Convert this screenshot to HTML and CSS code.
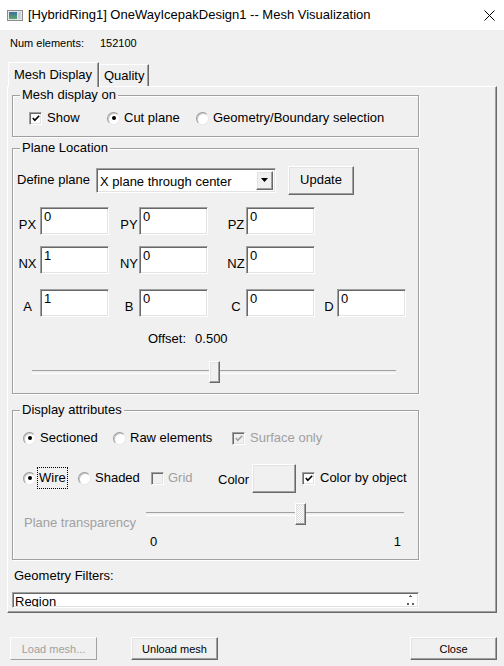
FILE: index.html
```html
<!DOCTYPE html>
<html>
<head>
<meta charset="utf-8">
<title>Mesh Visualization</title>
<link rel="stylesheet" href="styles.css">
</head>
<body>
<div class="titlebar">
  <svg class="appicon" width="16" height="11" viewBox="0 0 16 11">
    <defs>
      <linearGradient id="ig" x1="0" y1="0" x2="0" y2="1">
        <stop offset="0" stop-color="#3d6f9a"/>
        <stop offset="1" stop-color="#5fa46e"/>
      </linearGradient>
    </defs>
    <rect x="0.5" y="0.5" width="15" height="10" fill="#e8e8e8" stroke="#8a8a8a"/>
    <rect x="2" y="2" width="8" height="7" fill="url(#ig)"/>
    <rect x="11" y="2" width="3" height="7" fill="#c8d0d8"/>
  </svg>
  <span class="title">[HybridRing1] OneWayIcepakDesign1 -- Mesh Visualization</span>
  <svg class="close" width="11" height="11" viewBox="0 0 11 11">
    <path d="M0.5 0.5 L10.5 10.5 M10.5 0.5 L0.5 10.5" stroke="#000" stroke-width="1" fill="none"/>
  </svg>
</div>

<div class="numrow"><span class="numlabel">Num elements:</span><span>152100</span></div>

<div class="tabs">
  <div class="tab active">Mesh Display</div>
  <div class="tab">Quality</div>
</div>

<div class="panel">
  <div class="group g1">
    <div class="legend">Mesh display on</div>
    <div class="optrow mesh-row">
      <label class="opt w78"><span class="check"><svg width="11" height="11" viewBox="0 0 11 11"><path d="M2 5 L4.2 7.5 L9 2.5" stroke="#000" stroke-width="1.8" fill="none"/></svg></span>Show</label>
      <label class="opt w89"><span class="radio on"></span>Cut plane</label>
      <label class="opt"><span class="radio"></span>Geometry/Boundary selection</label>
    </div>
  </div>

  <div class="group g2">
    <div class="legend">Plane Location</div>
    <div class="define-row">
      <span class="define-label">Define plane</span>
      <div class="select sunken">
        <span class="select-text">X plane through center</span>
        <span class="drop raised"><svg width="7" height="4" viewBox="0 0 7 4"><path d="M0 0 H7 L3.5 4 Z" fill="#000"/></svg></span>
      </div>
      <div class="button raised update">Update</div>
    </div>
    <div class="prow r1">
      <span class="plabel">PX</span><span class="field sunken">0</span>
      <span class="plabel">PY</span><span class="field sunken">0</span>
      <span class="plabel">PZ</span><span class="field sunken">0</span>
    </div>
    <div class="prow r2">
      <span class="plabel">NX</span><span class="field sunken">1</span>
      <span class="plabel">NY</span><span class="field sunken">0</span>
      <span class="plabel">NZ</span><span class="field sunken">0</span>
    </div>
    <div class="prow r3">
      <span class="plabel">A</span><span class="field sunken">1</span>
      <span class="plabel">B</span><span class="field sunken">0</span>
      <span class="plabel">C</span><span class="field sunken">0</span>
      <span class="plabel">D</span><span class="field sunken">0</span>
    </div>
    <div class="offset-row"><span>Offset:</span><span class="offset-val">0.500</span></div>
    <div class="slider offset-slider" style="--v:0.5"><span class="thumb raised"></span></div>
  </div>

  <div class="group g3">
    <div class="legend">Display attributes</div>
    <div class="optrow attr-row1">
      <label class="opt w90"><span class="radio on"></span>Sectioned</label>
      <label class="opt w119"><span class="radio"></span>Raw elements</label>
      <label class="opt disabled"><span class="check off"><svg width="11" height="11" viewBox="0 0 11 11"><path d="M2 5 L4.2 7.5 L9 2.5" stroke="#a0a0a0" stroke-width="1.8" fill="none"/></svg></span>Surface only</label>
    </div>
    <div class="optrow attr-row2">
      <label class="opt w55"><span class="radio on"></span><span class="focus">Wire</span></label>
      <label class="opt w73"><span class="radio"></span>Shaded</label>
      <label class="opt w67 disabled"><span class="check off grid-check"></span>Grid</label>
      <span class="color-label">Color</span>
      <div class="button raised color-btn"></div>
      <label class="opt"><span class="check"><svg width="11" height="11" viewBox="0 0 11 11"><path d="M2 5 L4.2 7.5 L9 2.5" stroke="#000" stroke-width="1.8" fill="none"/></svg></span>Color by object</label>
    </div>
    <div class="trans-row">
      <span class="trans-label">Plane transparency</span>
      <div class="slider trans-slider" style="--v:0.603"><span class="thumb raised dither"></span></div>
    </div>
    <div class="scale-row"><span>0</span><span>1</span></div>
  </div>

  <div class="filters-label">Geometry Filters:</div>
  <div class="listbox sunken">
    <span class="list-text">Region</span>
    <svg class="spin" width="12" height="14" viewBox="0 0 12 14">
      <path d="M5 4 H8 V5 H5 Z M6 3 H7 V4 H6 Z" fill="#606060"/>
      <rect x="3" y="11" width="2" height="2" fill="#606060"/>
      <rect x="8" y="11" width="2" height="2" fill="#606060"/>
    </svg>
  </div>
</div>

<div class="bottom-row">
  <div class="button raised small disabled-btn">Load mesh...</div>
  <div class="button raised small unload">Unload mesh</div>
  <div class="button raised small close-btn">Close</div>
</div>
</body>
</html>
```

FILE: styles.css
```css
* { box-sizing: border-box; }
html, body { margin: 0; padding: 0; }
body {
  width: 504px;
  height: 666px;
  overflow: hidden;
  background: #f0f0f0;
  font-family: "Liberation Sans", Arial, sans-serif;
  font-size: 13px;
  line-height: 16px;
  color: #000;
}

/* title bar */
.titlebar {
  height: 30px;
  background: #fff;
  display: flex;
  align-items: center;
  padding-left: 7px;
}
.appicon { margin-right: 5px; }
.title { font-size: 13px; }
.close { margin-left: auto; margin-right: 9px; }

/* num elements */
.numrow {
  height: 26px;
  display: flex;
  align-items: center;
  padding-left: 10px;
  font-size: 11px;
}
.numlabel { width: 90px; }

/* tabs */
.tabs {
  margin-top: 6px;
  height: 24px;
  display: flex;
  align-items: flex-end;
  padding-left: 8px;
}
.tab {
  height: 22px;
  width: 50px;
  padding-left: 4px;
  line-height: 21px;
  border-top: 1px solid #fff;
  border-left: 1px solid #fff;
  border-right: 1px solid #696969;
  box-shadow: inset -1px 0 0 #a0a0a0;
  background: #f0f0f0;
}
.tab.active {
  width: 91px;
  height: 25px;
  padding-left: 5px;
  line-height: 23px;
  margin-bottom: -1px;
  position: relative;
  z-index: 1;
}

/* main panel */
.panel {
  margin-left: 7px;
  width: 490px;
  height: 527px;
  border-top: 1px solid #fff;
  border-left: 1px solid #fff;
  border-right: 1px solid #696969;
  border-bottom: 1px solid #696969;
  box-shadow: inset -1px -1px 0 #a0a0a0;
  padding-left: 4px;
}

/* group boxes */
.group {
  width: 407px;
  border: 1px solid #a0a0a0;
  box-shadow: 1px 1px 0 #fff, inset 1px 1px 0 #fff;
}
.legend {
  display: table;
  margin: -9px 0 0 7px;
  padding: 0 2px;
  background: #f0f0f0;
  line-height: 16px;
}
.g1 { margin-top: 8px; height: 42px; }
.g2 { margin-top: 11px; height: 246px; }
.g3 { margin-top: 16px; height: 150px; }

/* option rows */
.optrow { display: flex; align-items: center; }
.mesh-row { margin-top: 5px; height: 20px; padding-left: 16px; }
.attr-row1 { margin-top: 10px; height: 20px; padding-left: 10px; }
.attr-row2 { margin-top: 15px; height: 30px; padding-left: 10px; }
.opt { display: flex; align-items: center; flex: none; }
.w55 { width: 55px; }
.w67 { width: 67px; }
.w73 { width: 73px; }
.w78 { width: 78px; }
.w89 { width: 89px; }
.w90 { width: 90px; }
.w119 { width: 119px; }
.disabled { color: #a0a0a0; }

.check {
  width: 13px;
  height: 13px;
  margin-right: 5px;
  background: #fff;
  border: 1px solid;
  border-color: #a0a0a0 #fff #fff #a0a0a0;
  box-shadow: inset 1px 1px 0 #696969, inset -1px -1px 0 #e3e3e3;
  display: flex;
  align-items: center;
  justify-content: center;
  flex: none;
}
.check svg { margin: 0 0 0 1px; }
.check.off { background: #f0f0f0; }
.grid-check { margin-right: 4px; }

.radio {
  width: 13px;
  height: 13px;
  margin-right: 4px;
  border-radius: 50%;
  background: #fff;
  border: 1px solid;
  border-color: #9a9a9a #e8e8e8 #e8e8e8 #9a9a9a;
  box-shadow: inset 1px 1px 0 #c8c8c8;
  display: flex;
  align-items: center;
  justify-content: center;
  flex: none;
}
.radio.on::after {
  content: "";
  width: 4px;
  height: 4px;
  border-radius: 50%;
  background: #000;
}
.focus {
  outline: 1px dotted #000;
  padding: 2px 1px;
  margin-left: -2px;
}

/* sunken / raised */
.sunken {
  background: #fff;
  border: 1px solid;
  border-color: #a0a0a0 #fff #fff #a0a0a0;
  box-shadow: inset 1px 1px 0 #696969, inset -1px -1px 0 #e3e3e3;
}
.raised {
  background: #f0f0f0;
  border: 1px solid;
  border-color: #fff #696969 #696969 #fff;
  box-shadow: inset -1px -1px 0 #a0a0a0, inset 1px 1px 0 #e3e3e3;
}

/* define plane row */
.define-row {
  margin-top: 9px;
  height: 30px;
  display: flex;
  align-items: center;
  padding-left: 4px;
}
.define-label { width: 79px; }
.select {
  width: 180px;
  height: 25px;
  display: flex;
  align-items: stretch;
  padding: 2px;
}
.select-text { flex: 1; padding-left: 1px; line-height: 21px; }
.drop {
  width: 17px;
  display: flex;
  align-items: center;
  justify-content: center;
}
.button {
  display: flex;
  align-items: center;
  justify-content: center;
}
.update { margin-left: 12px; width: 66px; height: 29px; }

/* parameter rows */
.prow {
  display: grid;
  grid-template-columns: 25px 69px 30px 69px 38px 69px 22px 69px;
  padding-left: 2px;
  height: 28px;
}
.r1 { margin-top: 12px; }
.r2 { margin-top: 11px; }
.r3 { margin-top: 15px; }
.plabel { text-align: center; padding-top: 7px; align-self: center; }
.prow .plabel:nth-child(3) { padding-left: 10px; }
.prow .plabel:nth-child(5) { padding-left: 18px; }
.prow .plabel:nth-child(7) { padding-left: 6px; }
.field { height: 28px; padding: 1px 3px; }

.offset-row { margin-top: 14px; height: 16px; padding-left: 135px; display: flex; }
.offset-val { margin-left: 9px; }

/* sliders */
.slider {
  position: relative;
  height: 22px;
}
.slider::before {
  content: "";
  position: absolute;
  left: 0;
  right: 0;
  top: 9px;
  height: 2px;
  border-top: 1px solid #a0a0a0;
  border-bottom: 1px solid #fff;
}
.thumb {
  position: absolute;
  top: 0;
  left: calc(var(--v) * (100% - 11px));
  width: 11px;
  height: 22px;
}
.dither {
  background: repeating-conic-gradient(#fff 0 25%, #dcdcdc 0 50%) 0 0 / 2px 2px;
}
.offset-slider { margin-top: 14px; margin-left: 19px; width: 364px; }

.color-label { width: 34px; padding-top: 3px; }
.color-btn { width: 44px; height: 29px; margin-right: 6px; }

.trans-row {
  margin-top: 10px;
  display: grid;
  grid-template-columns: 133px 258px;
  height: 22px;
}
.trans-label { color: #a0a0a0; padding-left: 11px; padding-top: 12px; white-space: nowrap; }
.scale-row {
  margin: 9px 0 0 133px;
  width: 258px;
  display: flex;
  justify-content: space-between;
  padding: 0 3px 0 4px;
}

/* geometry filters */
.filters-label { margin: 8px 0 0 2px; }
.listbox {
  margin-top: 8px;
  width: 407px;
  height: 16px;
  overflow: hidden;
  display: flex;
  padding: 1px 2px 0 2px;
}
.list-text { flex: 1; line-height: 16px; }
.spin { margin-top: -2px; flex: none; }

/* bottom buttons */
.bottom-row {
  margin-top: 24px;
  display: flex;
  padding-left: 10px;
  padding-right: 7px;
}
.small { width: 87px; height: 23px; font-size: 11px; }
.unload { margin-left: 34px; }
.close-btn { margin-left: auto; }
.disabled-btn {
  color: #a0a0a0;
  border-color: #fff #a0a0a0 #a0a0a0 #fff;
  box-shadow: none;
}
```
